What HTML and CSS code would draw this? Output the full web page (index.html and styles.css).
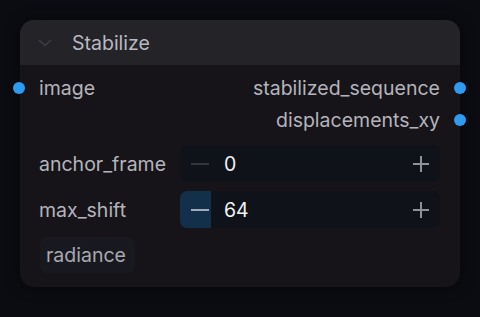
FILE: index.html
```html
<!DOCTYPE html>
<html lang="en">
  <head>
    <meta charset="UTF-8" />
    <meta name="viewport" content="width=device-width, initial-scale=1.0" />
    <title>Stabilize</title>
    <link rel="stylesheet" href="styles.css">
  </head>
  <body>
    <div class="node">
      <div class="header">
        <svg class="chevron" width="14" height="8" viewBox="0 0 14 8">
          <path d="M1 1 L7 6.5 L13 1" fill="none" stroke="#3c3d48" stroke-width="1.6" />
        </svg>
        <span class="title">Stabilize</span>
      </div>

      <div class="body">
        <!-- inputs / outputs -->
        <div class="slot">
          <span class="dot in"></span>
          <span class="name">image</span>
          <span class="name out">stabilized_sequence</span>
          <span class="dot outdot"></span>
        </div>
        <div class="slot">
          <span class="name out">displacements_xy</span>
          <span class="dot outdot"></span>
        </div>

        <!-- number widgets -->
        <div class="widget">
          <span class="label">anchor_frame</span>
          <div class="stepper">
            <span class="btn minus dim">
              <svg width="20" height="4" viewBox="0 0 20 4"><path d="M1 2 H19" stroke="currentColor" stroke-width="2" /></svg>
            </span>
            <span class="value">0</span>
            <span class="btn plus">
              <svg width="18" height="18" viewBox="0 0 18 18"><path d="M1 9 H17 M9 1 V17" stroke="currentColor" stroke-width="2" /></svg>
            </span>
          </div>
        </div>
        <div class="widget">
          <span class="label">max_shift</span>
          <div class="stepper">
            <span class="btn minus active">
              <svg width="20" height="4" viewBox="0 0 20 4"><path d="M1 2 H19" stroke="currentColor" stroke-width="2" /></svg>
            </span>
            <span class="value">64</span>
            <span class="btn plus">
              <svg width="18" height="18" viewBox="0 0 18 18"><path d="M1 9 H17 M9 1 V17" stroke="currentColor" stroke-width="2" /></svg>
            </span>
          </div>
        </div>

        <div class="badge">radiance</div>
      </div>
    </div>
  </body>
</html>
```

FILE: styles.css
```css
body {
  margin: 0;
  padding: 20px;
  background-color: #0b0c11;
  font-family: Inter, "Noto Sans", sans-serif;
}

.node {
  width: 440px;
  height: 267px;
  background-color: #161418;
  border-radius: 14px;
  box-shadow: 0 0 14px rgba(0, 0, 0, 0.5);
}

.header {
  height: 45px;
  background-color: #232328;
  border-radius: 14px 14px 0 0;
  display: flex;
  align-items: center;
  padding-left: 18px;
}

.chevron {
  margin-right: 20px;
  margin-top: 1px;
}

.title {
  color: #b9b9c2;
  font-size: 19.5px;
}

.body {
  padding: 7px 20px 0 19px;
  display: flex;
  flex-direction: column;
}

.slot {
  height: 32px;
  display: flex;
  align-items: center;
  position: relative;
}

.name {
  color: #b4b4bc;
  font-size: 19.5px;
}

.out {
  margin-left: auto;
}

.dot {
  width: 12px;
  height: 12px;
  border-radius: 50%;
  background-color: #2e9bf0;
  position: absolute;
  top: 10px;
}

.dot.in {
  left: -26px;
}

.dot.outdot {
  right: -26px;
}

.widget {
  display: flex;
  align-items: center;
  height: 37px;
  margin-top: 9px;
}

.label {
  color: #b4b4bc;
  font-size: 19.5px;
  width: 141px;
}

.stepper {
  flex: 1;
  height: 100%;
  background-color: #0f1218;
  border-radius: 7px;
  display: flex;
  align-items: center;
}

.btn {
  width: 31px;
  height: 100%;
  display: flex;
  align-items: center;
  justify-content: center;
  color: #8f9198;
}

.minus {
  border-radius: 7px 0 0 7px;
  padding-left: 8px;
  width: 23px;
}

.minus.dim {
  color: #33363e;
}

.minus.active {
  background-color: #123049;
  color: #a2acb8;
}

.value {
  color: #f2f2f4;
  font-size: 19.5px;
  margin-left: 13px;
  flex: 1;
}

.plus {
  margin-right: 4px;
}

.badge {
  align-self: flex-start;
  margin-top: 9px;
  margin-left: 1px;
  padding: 0 9px 0 6px;
  height: 36px;
  line-height: 36px;
  background-color: #18191f;
  border-radius: 7px;
  color: #a9a9b1;
  font-size: 19.5px;
}
```
